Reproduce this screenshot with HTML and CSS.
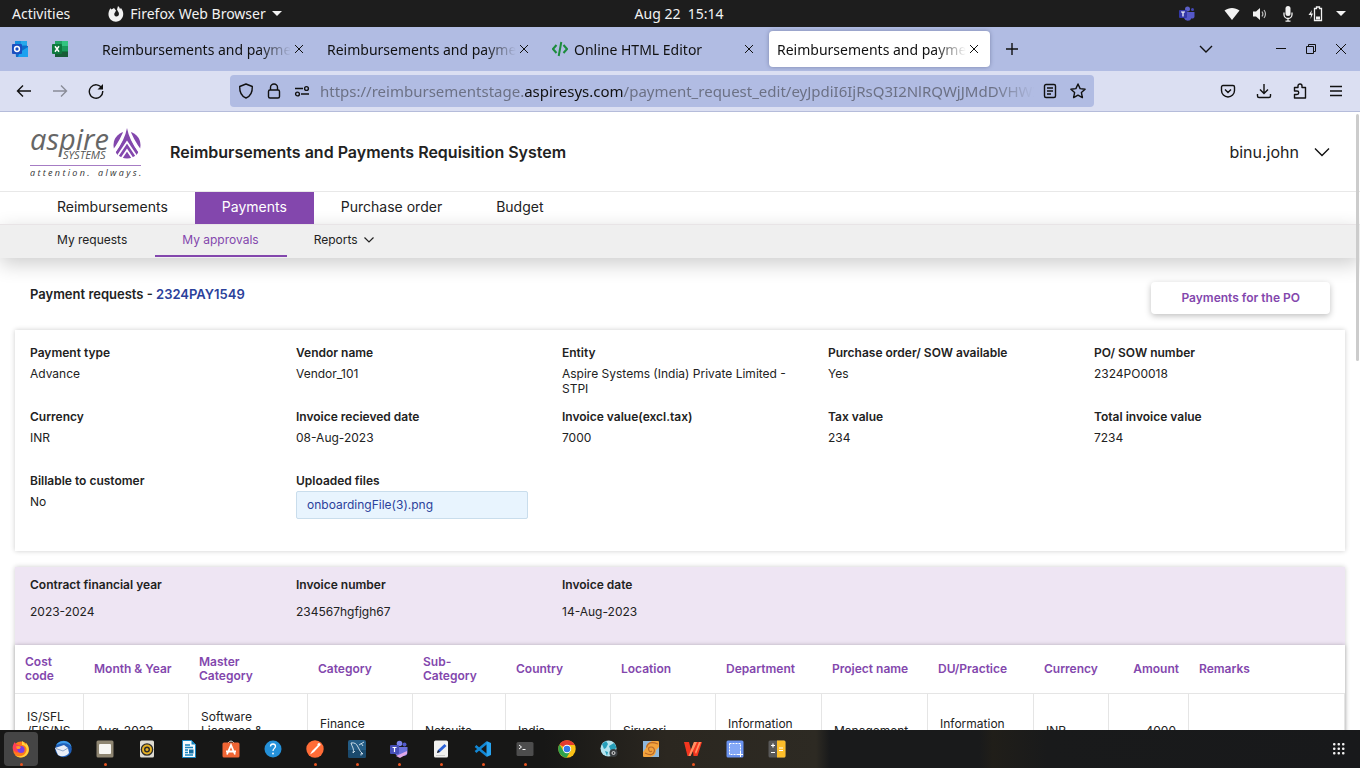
FILE: index.html
```html
<!DOCTYPE html>
<html lang="en">
<head>
<meta charset="utf-8">
<title>Reimbursements and payments</title>
<link rel="stylesheet" href="styles.css">
</head>
<body>
<div class="sysbar">
  <div class="sys-left">
    <button class="sys-btn">Activities</button>
    <button class="sys-btn sys-app">
      <svg class="i16" viewBox="0 0 16 16"><path d="M6 2 8 4.500 7 6.500C5.500 8 6.500 10.500 8.500 10.500 11 10.500 11.800 7.500 10 5.500L9 3.500 10 0C11 .8 11.700 1.800 12 3L13 2C15 4.500 15.700 7.500 15 10 14 13.500 11.200 15.700 8 15.700 4 15.700 .8 12.700.5 9 .3 6.500 1 4 2.500 2.200L3.500 3.500Z" fill="#f2f2f2"/></svg>
      <span>Firefox Web Browser</span>
      <span class="caret"></span>
    </button>
  </div>
  <div class="sys-clock">Aug 22&nbsp; 15:14</div>
  <div class="sys-right">
    <svg class="i16 teams-tray" viewBox="0 0 16 16"><circle cx="8.500" cy="3" r="2.500" fill="#5b5fc7"/><circle cx="13.500" cy="3.500" r="1.500" fill="#4448b5"/><path d="M5 6h10.500v4.500a2 2 0 0 1-3 1.700A4 4 0 0 1 5 12z" fill="#5558c8"/><rect y="4" width="8" height="8" rx="1" fill="#3438a8"/><path d="M2 6h4M4 6v4.500" stroke="#fff" stroke-width="1.200"/></svg>
    <svg class="i16" viewBox="0 0 16 16"><path d="M.5 4.500C5 1 11 1 15.500 4.500L8 14z" fill="#f2f2f2"/></svg>
    <svg class="i16" viewBox="0 0 16 16"><path d="M1 5.500h3L8 2v12l-4-3.500H1z" fill="#f2f2f2"/><path d="M10 5.500q1.800 2.500 0 5M12 4q3 4 0 8" fill="none" stroke="#bbb" stroke-width="1.200"/></svg>
    <svg class="i16" viewBox="0 0 16 16"><rect x="5.500" y="0" width="5" height="10" rx="2.500" fill="#f2f2f2"/><path d="M4 6.500v2a4 4 0 0 0 8 0v-2M8 12v3M5.500 15.200h5" fill="none" stroke="#f2f2f2" stroke-width="1.300"/></svg>
    <svg class="i16" viewBox="0 0 16 16"><path d="M4 4 .5 9H3l-.5 4L5 7.500H3.200z" fill="#f2f2f2"/><path d="M8.500 2.500V1h3v1.500h2v12h-7v-12z" fill="none" stroke="#f2f2f2" stroke-width="1.300"/><path d="M8 10.500h4v3H8z" fill="#f2f2f2"/></svg>
    <span class="caret"></span>
  </div>
</div>

<div class="tabstrip">
  <div class="pins">
    <button class="icon-btn" aria-label="Outlook"><svg class="i16" viewBox="0 0 16 16"><path d="M3 0h12v6H3z" fill="#1490df"/><path d="M9 0h6v4H9z" fill="#28a8ea"/><path d="M3 5h13v11H4z" fill="#0f6cc9"/><path d="M8 11l8-5v10H6z" fill="#1ba1ef"/><rect y="3" width="10" height="10" rx="1" fill="#1b4fc0"/><circle cx="5" cy="8" r="2.400" fill="none" stroke="#fff" stroke-width="1.500"/></svg></button>
    <button class="icon-btn" aria-label="Excel"><svg class="i16" viewBox="0 0 16 16"><path d="M3 0h13v16H3z" fill="#107c41"/><path d="M3 0h7v5H3z" fill="#21a366"/><path d="M10 0h6v5h-6z" fill="#33c481"/><path d="M10 5h6v5h-6z" fill="#1b9a5c"/><path d="M3 11h13v5H3z" fill="#185c37"/><rect y="3" width="10" height="10" rx="1" fill="#0d7a3e"/><path d="M3 5.300l4 5.400M7 5.300l-4 5.400" stroke="#fff" stroke-width="1.500"/></svg></button>
  </div>
  <div class="tabs">
    <div class="tab"><button class="tab-name">Reimbursements and payments</button><button class="tab-x" aria-label="Close tab"><svg viewBox="0 0 10 10"><path d="M1 1l8 8M9 1l-8 8"/></svg></button></div>
    <div class="tab"><button class="tab-name">Reimbursements and payments</button><button class="tab-x" aria-label="Close tab"><svg viewBox="0 0 10 10"><path d="M1 1l8 8M9 1l-8 8"/></svg></button></div>
    <div class="tab"><svg class="tab-code" viewBox="0 0 16 16"><path d="M4.500 4 1 8l3.500 4M11.500 4 15 8l-3.500 4M9.300 1 6.700 15" fill="none" stroke="#1c8c3c" stroke-width="2"/></svg><button class="tab-name">Online HTML Editor</button><button class="tab-x" aria-label="Close tab"><svg viewBox="0 0 10 10"><path d="M1 1l8 8M9 1l-8 8"/></svg></button></div>
    <div class="tab tab-on"><button class="tab-name">Reimbursements and payments</button><button class="tab-x" aria-label="Close tab"><svg viewBox="0 0 10 10"><path d="M1 1l8 8M9 1l-8 8"/></svg></button></div>
  </div>
  <button class="icon-btn new-tab" aria-label="New tab"><svg class="line i16" viewBox="0 0 16 16"><path d="M8 2v12M2 8h12"/></svg></button>
  <div class="win">
    <button class="icon-btn list-tabs" aria-label="List tabs"><svg class="line i16" viewBox="0 0 16 16"><path d="M2 5l6 6 6-6"/></svg></button>
    <button class="icon-btn" aria-label="Minimize"><svg class="thin i16" viewBox="0 0 16 16"><path d="M3 7.500h10"/></svg></button>
    <button class="icon-btn" aria-label="Restore"><svg class="thin i16" viewBox="0 0 16 16"><path d="M3.500 5.500h7v7h-7zM5.500 5.500v-2h7v7h-2"/></svg></button>
    <button class="icon-btn" aria-label="Close"><svg class="thin i16" viewBox="0 0 16 16"><path d="M3 3l10 10M13 3 3 13"/></svg></button>
  </div>
</div>

<div class="toolbar">
  <div class="nav-btns">
    <button class="icon-btn" aria-label="Back"><svg class="line i16" viewBox="0 0 16 16"><path d="M15 8H1.500M7 2.500 1.500 8 7 13.500"/></svg></button>
    <button class="icon-btn faded" aria-label="Forward"><svg class="line i16" viewBox="0 0 16 16"><path d="M1 8h13.500M9 2.500 14.500 8 9 13.500"/></svg></button>
    <button class="icon-btn" aria-label="Reload"><svg class="line i16" viewBox="0 0 16 16"><path d="M14 5.500A6.700 6.700 0 1 0 14.700 8"/><path d="M15 1v5.500H9.500z" fill="#111" stroke="none"/></svg></button>
  </div>
  <div class="urlbar">
    <svg class="line i16" viewBox="0 0 16 16"><path d="M8 1 14.300 3.500C14.500 9 12 13.500 8 15 4 13.500 1.500 9 1.700 3.500z" stroke-linejoin="round"/></svg>
    <svg class="line i16" viewBox="0 0 16 16"><rect x="2.500" y="7" width="11" height="8" rx="1.500"/><path d="M4.500 7V4.500a3.500 3.500 0 0 1 7 0V7"/></svg>
    <svg class="line i16" viewBox="0 0 16 16"><path d="M1 5.500h8M7 11h8"/><circle cx="12.500" cy="5.500" r="1.900"/><circle cx="3.500" cy="11" r="1.900"/></svg>
    <div class="url" role="textbox" aria-label="Address" contenteditable="true" spellcheck="false">https://reimbursementstage.<b>aspiresys.com</b>/payment_request_edit/eyJpdiI6IjRsQ3I2NlRQWjJMdDVHWXc9PSIs</div>
    <svg class="line i16" viewBox="0 0 16 16"><rect x="2.500" y="1.500" width="11" height="13" rx="1.500"/><path d="M5 5h6M5 8h6M5 11h4"/></svg>
    <svg class="line i16" viewBox="0 0 16 16"><path d="M8 1l2.100 4.600 5 .6-3.700 3.400 1 5L8 12.100 3.600 14.600l1-5L.9 6.200l5-.6z" stroke-linejoin="round"/></svg>
  </div>
  <div class="tools">
    <button class="icon-btn" aria-label="Pocket"><svg class="line i16" viewBox="0 0 16 16"><path d="M3 2.500h10a1.500 1.500 0 0 1 1.500 1.500v3.500a6.500 6.500 0 0 1-13 0V4A1.500 1.500 0 0 1 3 2.500zM5 6.500l3 3 3-3"/></svg></button>
    <button class="icon-btn" aria-label="Downloads"><svg class="line i16" viewBox="0 0 16 16"><path d="M8 1v9.500M4 6.500l4 4 4-4M1.500 11v2a1.500 1.500 0 0 0 1.500 1.500h10a1.500 1.500 0 0 0 1.500-1.500v-2"/></svg></button>
    <button class="icon-btn" aria-label="Extensions"><svg class="line i16" viewBox="0 0 16 16"><path d="M2.500 15v-3.500h2.500a1.700 1.700 0 0 0 0-3.500H2.500V4.500H6V3a2 2 0 0 1 4 0v1.500h3.500V15z" stroke-linejoin="round"/></svg></button>
    <button class="icon-btn" aria-label="Menu"><svg class="line i16" viewBox="0 0 16 16"><path d="M2 3.500h12M2 8h12M2 12.500h12"/></svg></button>
  </div>
</div>

<div class="page">
  <header class="head">
    <a class="logo" href="#" aria-label="Aspire Systems">
      <svg viewBox="0 0 112 52">
        <text class="lg-name" x="0" y="24">aspire</text>
        <text class="lg-sub" x="33" y="33">SYSTEMS</text>
        <circle cx="97" cy="19" r="13.500" fill="#8347ad"/>
        <path d="M97 1Q93 14 83 27M97 1Q101 14 111 27" fill="none" stroke="#fff" stroke-width="4"/>
        <path d="M97 2Q95 13 86 26l2 4 9-14 9 14 2-4Q99 13 97 2z" fill="#8347ad"/>
        <path d="M87 31 97 16l10 15M91 33l6-9 6 9" fill="none" stroke="#fff" stroke-width="1.800"/>
        <path d="M0 39.500h111" stroke="#a67cc4"/>
        <text class="lg-tag" x="0" y="50">a t t e n t i o n .</text>
        <text class="lg-tag" x="68" y="50">a l w a y s .</text>
      </svg>
    </a>
    <h1>Reimbursements and Payments Requisition System</h1>
    <button class="user"><span>binu.john</span><svg class="line i16" viewBox="0 0 16 16"><path d="M1 4.500l7 7 7-7"/></svg></button>
  </header>
  <nav class="nav">
    <a href="#">Reimbursements</a><a class="on" href="#">Payments</a><a href="#">Purchase order</a><a href="#">Budget</a>
  </nav>
  <nav class="subnav">
    <a href="#">My requests</a><a class="on" href="#">My approvals</a><a href="#">Reports<svg viewBox="0 0 10 10"><path d="M.5 2.500 5 7l4.500-4.500"/></svg></a>
  </nav>
  <main>
    <div class="title-row">
      <h2>Payment requests - <a href="#">2324PAY1549</a></h2>
      <button class="po-btn">Payments for the PO</button>
    </div>
    <dl class="card details">
      <div><dt>Payment type</dt><dd>Advance</dd></div>
      <div><dt>Vendor name</dt><dd>Vendor_101</dd></div>
      <div><dt>Entity</dt><dd>Aspire Systems (India) Private Limited - STPI</dd></div>
      <div><dt>Purchase order/ SOW available</dt><dd>Yes</dd></div>
      <div><dt>PO/ SOW number</dt><dd>2324PO0018</dd></div>
      <div><dt>Currency</dt><dd>INR</dd></div>
      <div><dt>Invoice recieved date</dt><dd>08-Aug-2023</dd></div>
      <div><dt>Invoice value(excl.tax)</dt><dd>7000</dd></div>
      <div><dt>Tax value</dt><dd>234</dd></div>
      <div><dt>Total invoice value</dt><dd>7234</dd></div>
      <div><dt>Billable to customer</dt><dd>No</dd></div>
      <div class="files"><dt>Uploaded files</dt><dd><a href="#">onboardingFile(3).png</a></dd></div>
    </dl>
    <section class="card">
      <dl class="invoice">
        <div><dt>Contract financial year</dt><dd>2023-2024</dd></div>
        <div><dt>Invoice number</dt><dd>234567hgfjgh67</dd></div>
        <div><dt>Invoice date</dt><dd>14-Aug-2023</dd></div>
      </dl>
      <table class="lines">
        <colgroup><col class="w69"><col class="w105"><col class="w119"><col class="w105"><col class="w93"><col class="w105"><col class="w105"><col class="w106"><col class="w106"><col class="w106"><col class="w75"><col class="w80"><col></colgroup>
        <thead><tr><th>Cost code</th><th>Month &amp; Year</th><th>Master<br>Category</th><th>Category</th><th>Sub-<br>Category</th><th>Country</th><th>Location</th><th>Department</th><th>Project name</th><th>DU/Practice</th><th>Currency</th><th class="num">Amount</th><th>Remarks</th></tr></thead>
        <tbody><tr><td>IS/SFL<br>/FIS/NS<br>/IN</td><td>Aug-2023</td><td>Software<br>Licenses &amp;<br>Subscription</td><td>Finance<br>System</td><td>Netsuite</td><td>India</td><td>Siruseri</td><td>Information<br>System</td><td>Management</td><td>Information<br>System</td><td>INR</td><td class="num">4000</td><td></td></tr></tbody>
      </table>
    </section>
  </main>
  <div class="scroll"></div>
</div>

<div class="dock">
  <button class="app run active" aria-label="Firefox"><svg viewBox="0 0 18 18"><circle cx="9" cy="9.500" r="8" fill="#ff7a1c"/><path d="M10 1c2 1 3 3 3.500 4L14 3c3 3 4 8 1 11.500C12 18 6 18.500 3 15c3 2 9 2 11-3s-2-7-4-7z" fill="#ffd43a"/><path d="M1 10C0 6 2 3 3 2c0 1 .5 2 2 2.500L9 6l-4 7z" fill="#ff4056"/><circle cx="9" cy="9.500" r="3.600" fill="#7b3fe4"/><path d="M4 6.500q3-1 5 .5L7.500 9 5 9z" fill="#ff9a2a"/></svg></button>
  <button class="app" aria-label="Thunderbird"><svg viewBox="0 0 18 18"><circle cx="9.500" cy="9" r="8.300" fill="#1f5fb8"/><path d="M2 5C6-1 16 0 17.500 7 15 3 10 2 2 5z" fill="#3d9bea"/><path d="M1 8 10 5l4 3 1 5c-3 4-8 4-11 2z" fill="#e9eef7"/><path d="M2 8.500 9 11l5-3" fill="none" stroke="#8fa6c8"/></svg></button>
  <button class="app run" aria-label="Files"><svg viewBox="0 0 18 18"><rect x=".5" y=".5" width="17" height="17" rx="1.500" fill="#8f8672"/><rect x="3" y="4" width="12" height="10" rx="1" fill="#f7f6f3"/></svg></button>
  <button class="app" aria-label="Rhythmbox"><svg viewBox="0 0 18 18"><rect x="2" y=".5" width="14" height="17" rx="1.500" fill="#dedbd2"/><circle cx="9" cy="9.500" r="6.300" fill="#2b2b2b"/><circle cx="9" cy="9.500" r="4" fill="none" stroke="#e5b022" stroke-width="2"/><circle cx="9" cy="9.500" r="1.500" fill="#e5b022"/></svg></button>
  <button class="app" aria-label="Writer"><svg viewBox="0 0 18 18"><path d="M2.500.5h9l4 4v13h-13z" fill="#f4fafd" stroke="#1583bd"/><path d="M11.500.5v4h4z" fill="#1583bd"/><path d="M5 5h5M5 7.500h8M5 10h3M5 12.500h3M5 15h8" stroke="#1583bd" stroke-width="1.400"/><path d="M9 9.500h4.500v4H9z" fill="#136b9e"/></svg></button>
  <button class="app" aria-label="Software"><svg viewBox="0 0 18 18"><path d="M6 3q3-4 6 0" fill="none" stroke="#ddd"/><rect x=".5" y="2.500" width="17" height="15" rx="1.500" fill="#ef6534"/><path d="M5 14.500 9 5l4 9.500M4 11.500h10" fill="none" stroke="#fff" stroke-width="1.800"/></svg></button>
  <button class="app" aria-label="Help"><svg viewBox="0 0 18 18"><circle cx="9" cy="9" r="8.500" fill="#2490d8"/><path d="M6.500 6.500q0-2.500 2.500-2.500t2.500 2.300C11.500 8.500 9 8.300 9 11" fill="none" stroke="#fff" stroke-width="1.300"/><circle cx="9" cy="13.500" r=".9" fill="#fff"/></svg></button>
  <button class="app run" aria-label="Postman"><svg viewBox="0 0 18 18"><circle cx="9" cy="9" r="8.700" fill="#ff6c37"/><path d="M4 14.500 6 11l6-6 1.500 1L8 12z" fill="#fff"/><circle cx="13" cy="4.500" r="1.500" fill="#fff"/></svg></button>
  <button class="app run" aria-label="MySQL Workbench"><svg viewBox="0 0 18 18"><rect width="18" height="18" rx="2" fill="#235c85"/><path d="M0 10h18v6a2 2 0 0 1-2 2H2a2 2 0 0 1-2-2z" fill="#1b4a6d"/><path d="M3 3q5-1 7 4t5 7l-2-.5v2M3 3q1 3 2 5t0 5l2-2M11 5l5-3M13 3l2 3" fill="none" stroke="#d7e5ef" stroke-width=".9"/></svg></button>
  <button class="app run" aria-label="Teams"><svg viewBox="0 0 18 18"><circle cx="9.500" cy="3.500" r="2.800" fill="#7b83eb"/><circle cx="14.500" cy="4.500" r="2" fill="#5059c9"/><path d="M5 7h12.500v5a4 4 0 0 1-4 4H8a4 4 0 0 1-3-3z" fill="#6a70dc"/><rect y="5" width="9" height="9" rx="1" fill="#4850b8"/><path d="M2.500 7.500h4M4.500 7.500v4.500" stroke="#fff" stroke-width="1.200"/><path d="M6 16l11-5v3l-7 4z" fill="#e0a8e8"/></svg></button>
  <button class="app run" aria-label="Text Editor"><svg viewBox="0 0 18 18"><rect x="2" y=".5" width="14" height="17" rx="1.500" fill="#f1f1ef"/><path d="M5 13l1-3 6.500-6 2 2L8 12z" fill="#2b62d8"/><path d="M5 13l1-3 2 2z" fill="#222"/><path d="M4 15.500h9" stroke="#ccc"/></svg></button>
  <button class="app run" aria-label="VS Code"><svg viewBox="0 0 18 18"><path d="M1.500 6 13 15.500M1.500 12 13 2.500" stroke="#1287d4" stroke-width="2.600"/><path d="M12.500 1 17 3v12l-4.500 2z" fill="#28a4f0"/></svg></button>
  <button class="app run" aria-label="Terminal"><svg viewBox="0 0 18 18"><rect x=".5" y="2" width="17" height="14" rx="1.500" fill="#4d4d4d"/><path d="M3 5l2.500 2L3 9M6.500 9.500h3" fill="none" stroke="#fff"/></svg></button>
  <button class="app" aria-label="Chrome"><svg viewBox="0 0 18 18"><circle cx="9" cy="9" r="8.700" fill="#fbc116"/><path d="M9 9 1.500 4.600A8.700 8.700 0 0 1 16.700 5H9z" fill="#e33b2e"/><path d="M1.500 4.600A8.700 8.700 0 0 0 8.500 17.700L12.500 11 9 9 5.500 11z" fill="#2fa24c"/><circle cx="9" cy="9" r="4.200" fill="#fff"/><circle cx="9" cy="9" r="3.300" fill="#3279ea"/></svg></button>
  <button class="app" aria-label="Web settings"><svg viewBox="0 0 18 18"><circle cx="8.500" cy="8.500" r="8" fill="#b5e3ee"/><path d="M2 4l4-3 2 3-2 4-2 1zM9 6l5-3 2.500 4-3 5-3-2zM5 11l3 1-1 4z" fill="#279fba"/><circle cx="13.500" cy="13" r="4" fill="#3b3f42"/><circle cx="13.500" cy="13" r="1.500" fill="none" stroke="#ddd"/></svg></button>
  <button class="app" aria-label="Swirl"><svg viewBox="0 0 18 18"><rect x="1" y="1" width="16" height="16" rx="1" fill="#f3a33c"/><path d="M1 1h9Q4 3 4 8l-3 4zM17 17H8q6-1 6-7l3-3z" fill="#8eb8dd"/><path d="M3 13q8 4 9.500-2 0-4-3.500-4T7 10.500q1 2 3 .5M16 4Q6 0 4.500 7.500" fill="none" stroke="#b96a2a" stroke-width="1.200"/></svg></button>
  <button class="app run" aria-label="WPS Office"><svg viewBox="0 0 18 18"><path d="M0 2h5l2 8 3-8h8l-4.500 14h-4L9 11l-2.500 5h-3z" fill="#f3361f"/><path d="M10 2h3l-6.500 14h-2zM11 12l4-10h2l-5 12z" fill="#ff9263"/></svg></button>
  <button class="app" aria-label="Screenshot"><svg viewBox="0 0 18 18"><rect x=".5" y=".5" width="17" height="17" rx="1.500" fill="#6a92ee"/><rect x="3.500" y="3.500" width="11" height="11" fill="#84a8f7" stroke="#fff" stroke-dasharray="2 1"/><path d="M14.500 12v5M12 14.500h5" stroke="#fff"/></svg></button>
  <button class="app" aria-label="Calculator"><svg viewBox="0 0 18 18"><rect x=".5" y=".5" width="17" height="17" rx="1.500" fill="#595959"/><path d="M9 .5h7a1.500 1.500 0 0 1 1.500 1.500v14a1.500 1.500 0 0 1-1.500 1.500H9z" fill="#fdbe2a"/><path d="M3 5.500h4M5 3.500v4M3 12.500h4M11 8h4M11 10.500h4" stroke="#fff" stroke-width="1.200"/></svg></button>
  <button class="app all-apps" aria-label="Show applications"><svg viewBox="0 0 18 18"><g fill="#f2f2f2"><rect x="3" y="3" width="2.500" height="2.500" rx="1"/><rect x="7.500" y="3" width="2.500" height="2.500" rx="1"/><rect x="12" y="3" width="2.500" height="2.500" rx="1"/><rect x="3" y="7.500" width="2.500" height="2.500" rx="1"/><rect x="7.500" y="7.500" width="2.500" height="2.500" rx="1"/><rect x="12" y="7.500" width="2.500" height="2.500" rx="1"/><rect x="3" y="12" width="2.500" height="2.500" rx="1"/><rect x="7.500" y="12" width="2.500" height="2.500" rx="1"/><rect x="12" y="12" width="2.500" height="2.500" rx="1"/></g></svg></button>
</div>
</body>
</html>
```
FILE: styles.css
```css
* { box-sizing: border-box; }
body {
  margin: 0;
  height: 100vh;
  display: flex;
  flex-direction: column;
  overflow: hidden;
  font-family: Inter, "Open Sans", sans-serif;
  color: #222;
  background: #fff;
}
button { font: inherit; color: inherit; background: none; border: 0; padding: 0; }
a { color: inherit; text-decoration: none; }
svg { display: block; flex: none; }
h1, h2, dl, dd { margin: 0; }
.i16 { width: 16px; height: 16px; }
.line { fill: none; stroke: #111; stroke-width: 1.4; }
.thin { fill: none; stroke: #111; stroke-width: 1; }
.icon-btn { display: flex; }
.faded { opacity: .4; }

/* system bar */
.sysbar {
  flex: none;
  display: grid;
  grid-template-columns: 1fr auto 1fr;
  align-items: center;
  padding: 0 14px 0 12px;
  height: 27px;
  background: #1d1d1d;
  color: #f2f2f2;
  font: 14px/20px "Noto Sans", sans-serif;
}
.sys-left, .sys-app, .sys-right { display: flex; align-items: center; }
.sys-left { gap: 38px; }
.sys-app { gap: 6px; }
.sys-right { justify-content: flex-end; gap: 12px; }
.teams-tray { margin-right: 17px; }
.caret {
  border: 5px solid transparent;
  border-top-color: #f2f2f2;
  border-bottom: 0;
}

/* tab strip */
.tabstrip {
  flex: none;
  display: flex;
  align-items: center;
  height: 44px;
  padding: 0 11px 0 12px;
  background: #b1bce3;
  color: #111;
  font: 14px/20px "Noto Sans", sans-serif;
}
.pins { display: flex; gap: 24px; margin-right: 26px; }
.tabs { display: flex; gap: 4px; }
.tab {
  width: 221px;
  height: 36px;
  padding: 0 8px;
  display: flex;
  align-items: center;
  border-radius: 4px;
}
.tab-on { background: #fff; box-shadow: 0 0 4px #7c86ad; }
.tab-code { width: 16px; height: 16px; margin-right: 6px; }
.tab-name {
  flex: 1;
  min-width: 0;
  padding-top: 1px;
  text-align: left;
  white-space: nowrap;
  overflow: hidden;
  -webkit-mask-image: linear-gradient(to left, transparent, #000 32px);
  mask-image: linear-gradient(to left, transparent, #000 32px);
}
.tab-x { padding: 4px 3px; }
.tab-x svg { width: 10px; height: 10px; fill: none; stroke: #111; }
.new-tab { margin-left: 14px; }
.win { display: flex; gap: 14px; margin-left: auto; }
.list-tabs { margin-right: 45px; }

/* toolbar */
.toolbar {
  flex: none;
  display: flex;
  align-items: center;
  height: 41px;
  padding: 0 16px;
  background: #dbdff2;
  border-bottom: 1px solid #b5bcda;
}
.nav-btns { display: flex; gap: 20px; width: 214px; }
.urlbar {
  flex: 1;
  min-width: 0;
  max-width: 864px;
  height: 32px;
  padding: 0 8px;
  display: flex;
  align-items: center;
  gap: 12px;
  border-radius: 4px;
  background: #b1bce3;
}
.url {
  flex: 1;
  min-width: 0;
  margin-right: -4px;
  margin-left: -2px;
  overflow: hidden;
  white-space: nowrap;
  color: #6c7185;
  font: 15px/20px "Noto Sans", sans-serif;
  -webkit-mask-image: linear-gradient(to left, transparent, #000 40px);
  mask-image: linear-gradient(to left, transparent, #000 40px);
}
.url b { font-weight: 400; color: #111; }
.tools { display: flex; gap: 20px; margin-left: auto; }

/* web page */
.page { position: relative; flex: 1; min-height: 0; overflow: hidden; }
.head {
  display: flex;
  align-items: center;
  height: 80px;
  padding: 0 30px;
  border-bottom: 1px solid #e8e8e8;
}
.logo { margin-right: 28px; }
.logo svg { width: 112px; height: 52px; }
.lg-name { font: italic 29px "Open Sans", sans-serif; fill: #666; }
.lg-sub { font: italic 11px "Open Sans", sans-serif; fill: #555; }
.lg-tag { font: italic 9px "Open Sans", sans-serif; fill: #333; }
h1 { font-size: 16px; font-weight: 600; line-height: 20px; }
.user {
  display: flex;
  align-items: center;
  gap: 15px;
  margin-left: auto;
  font-size: 16px;
  line-height: 20px;
}
.nav, .subnav { display: flex; padding-left: 30px; line-height: 16px; }
.nav { font-size: 14px; }
.nav a { padding: 7px 27px 9px; }
.nav .on { background: #8347ad; color: #fff; }
.subnav {
  font-size: 12px;
  background: #efefef;
  border-top: 1px solid #e8e4e6;
  box-shadow: 0 6px 20px rgba(0, 0, 0, .2);
}
.subnav a {
  display: flex;
  align-items: center;
  gap: 6px;
  margin-bottom: 1px;
  padding: 7px 28px 7px 27px;
  border-bottom: 2px solid transparent;
}
.subnav .on { color: #8347ad; border-color: #8347ad; }
.subnav svg { width: 10px; height: 10px; fill: none; stroke: #222; stroke-width: 1.2; }
main { padding: 24px 15px; }
.title-row {
  display: flex;
  justify-content: space-between;
  align-items: flex-start;
  padding: 0 15px;
  margin-bottom: 16px;
}
h2 { font-size: 13px; font-weight: 600; line-height: 24px; }
h2 a, .files a { color: #2b419b; }
.po-btn {
  padding: 8px 30px;
  border-radius: 4px;
  background: #fff;
  color: #8347ad;
  font-size: 12px;
  font-weight: 600;
  line-height: 16px;
  box-shadow: 0 2px 6px rgba(0, 0, 0, .25);
}
.card { margin-bottom: 16px; background: #fff; box-shadow: 0 0 5px rgba(0, 0, 0, .2); }
.details, .invoice { display: grid; grid-template-columns: repeat(5, 1fr); font-size: 12px; }
.details { grid-auto-rows: minmax(64px, auto); padding: 15px 0 14px; }
.details > div, .invoice > div { padding: 0 15px; }
dt { font-size: 12px; font-weight: 600; line-height: 16px; }
dd { margin-top: 5px; line-height: 15px; }
.files dd { margin-top: 2px; }
.files a {
  display: block;
  margin-right: 4px;
  padding: 5px 10px;
  line-height: 16px;
  border: 1px solid #c9ddec;
  border-radius: 2px;
  background: #e8f4fe;
}
.invoice { padding: 10px 0 26px; background: #eee5f3; }
.invoice dd { margin-top: 11px; }
.lines {
  width: 100%;
  table-layout: fixed;
  border-collapse: separate;
  border-spacing: 0;
  background: #fff;
  box-shadow: 0 0 4px rgba(0, 0, 0, .25);
  font-size: 12px;
  line-height: 14px;
}
.lines th { height: 48px; padding: 0 10px; text-align: left; font-weight: 600; color: #8347ad; white-space: nowrap; }
.lines th:first-child { white-space: normal; }
.lines td { height: 75px; padding: 0 12px; border: 1px solid #e5e5e5; border-left: 0; white-space: nowrap; }
.lines .num { text-align: right; }
.w69 { width: 69px; }
.w75 { width: 75px; }
.w80 { width: 80px; }
.w93 { width: 93px; }
.w105 { width: 105px; }
.w106 { width: 106px; }
.w119 { width: 119px; }
.scroll {
  position: absolute;
  top: 2px;
  right: 1px;
  width: 3px;
  height: 247px;
  border-radius: 2px;
  background: #ccc;
}

/* dock */
.dock {
  flex: none;
  display: flex;
  align-items: center;
  gap: 8px;
  height: 38px;
  padding: 0 4px;
  background: linear-gradient(to right, #171716 0, #171716 40%, #2b2720 49%, #2d2a23 60%, #191a1b 61%, #191a1b 72%, #201e19 73%, #191a1b 77%, #18191b 100%);
}
.app {
  position: relative;
  width: 34px;
  height: 34px;
  display: flex;
  align-items: center;
  justify-content: center;
  border-radius: 4px;
}
.app svg { width: 18px; height: 18px; }
.active { background: #454545; }
.run::after {
  content: "";
  position: absolute;
  bottom: 0;
  left: 16px;
  width: 3px;
  height: 3px;
  border-radius: 50%;
  background: #e95420;
}
.all-apps { margin-left: auto; }
```
